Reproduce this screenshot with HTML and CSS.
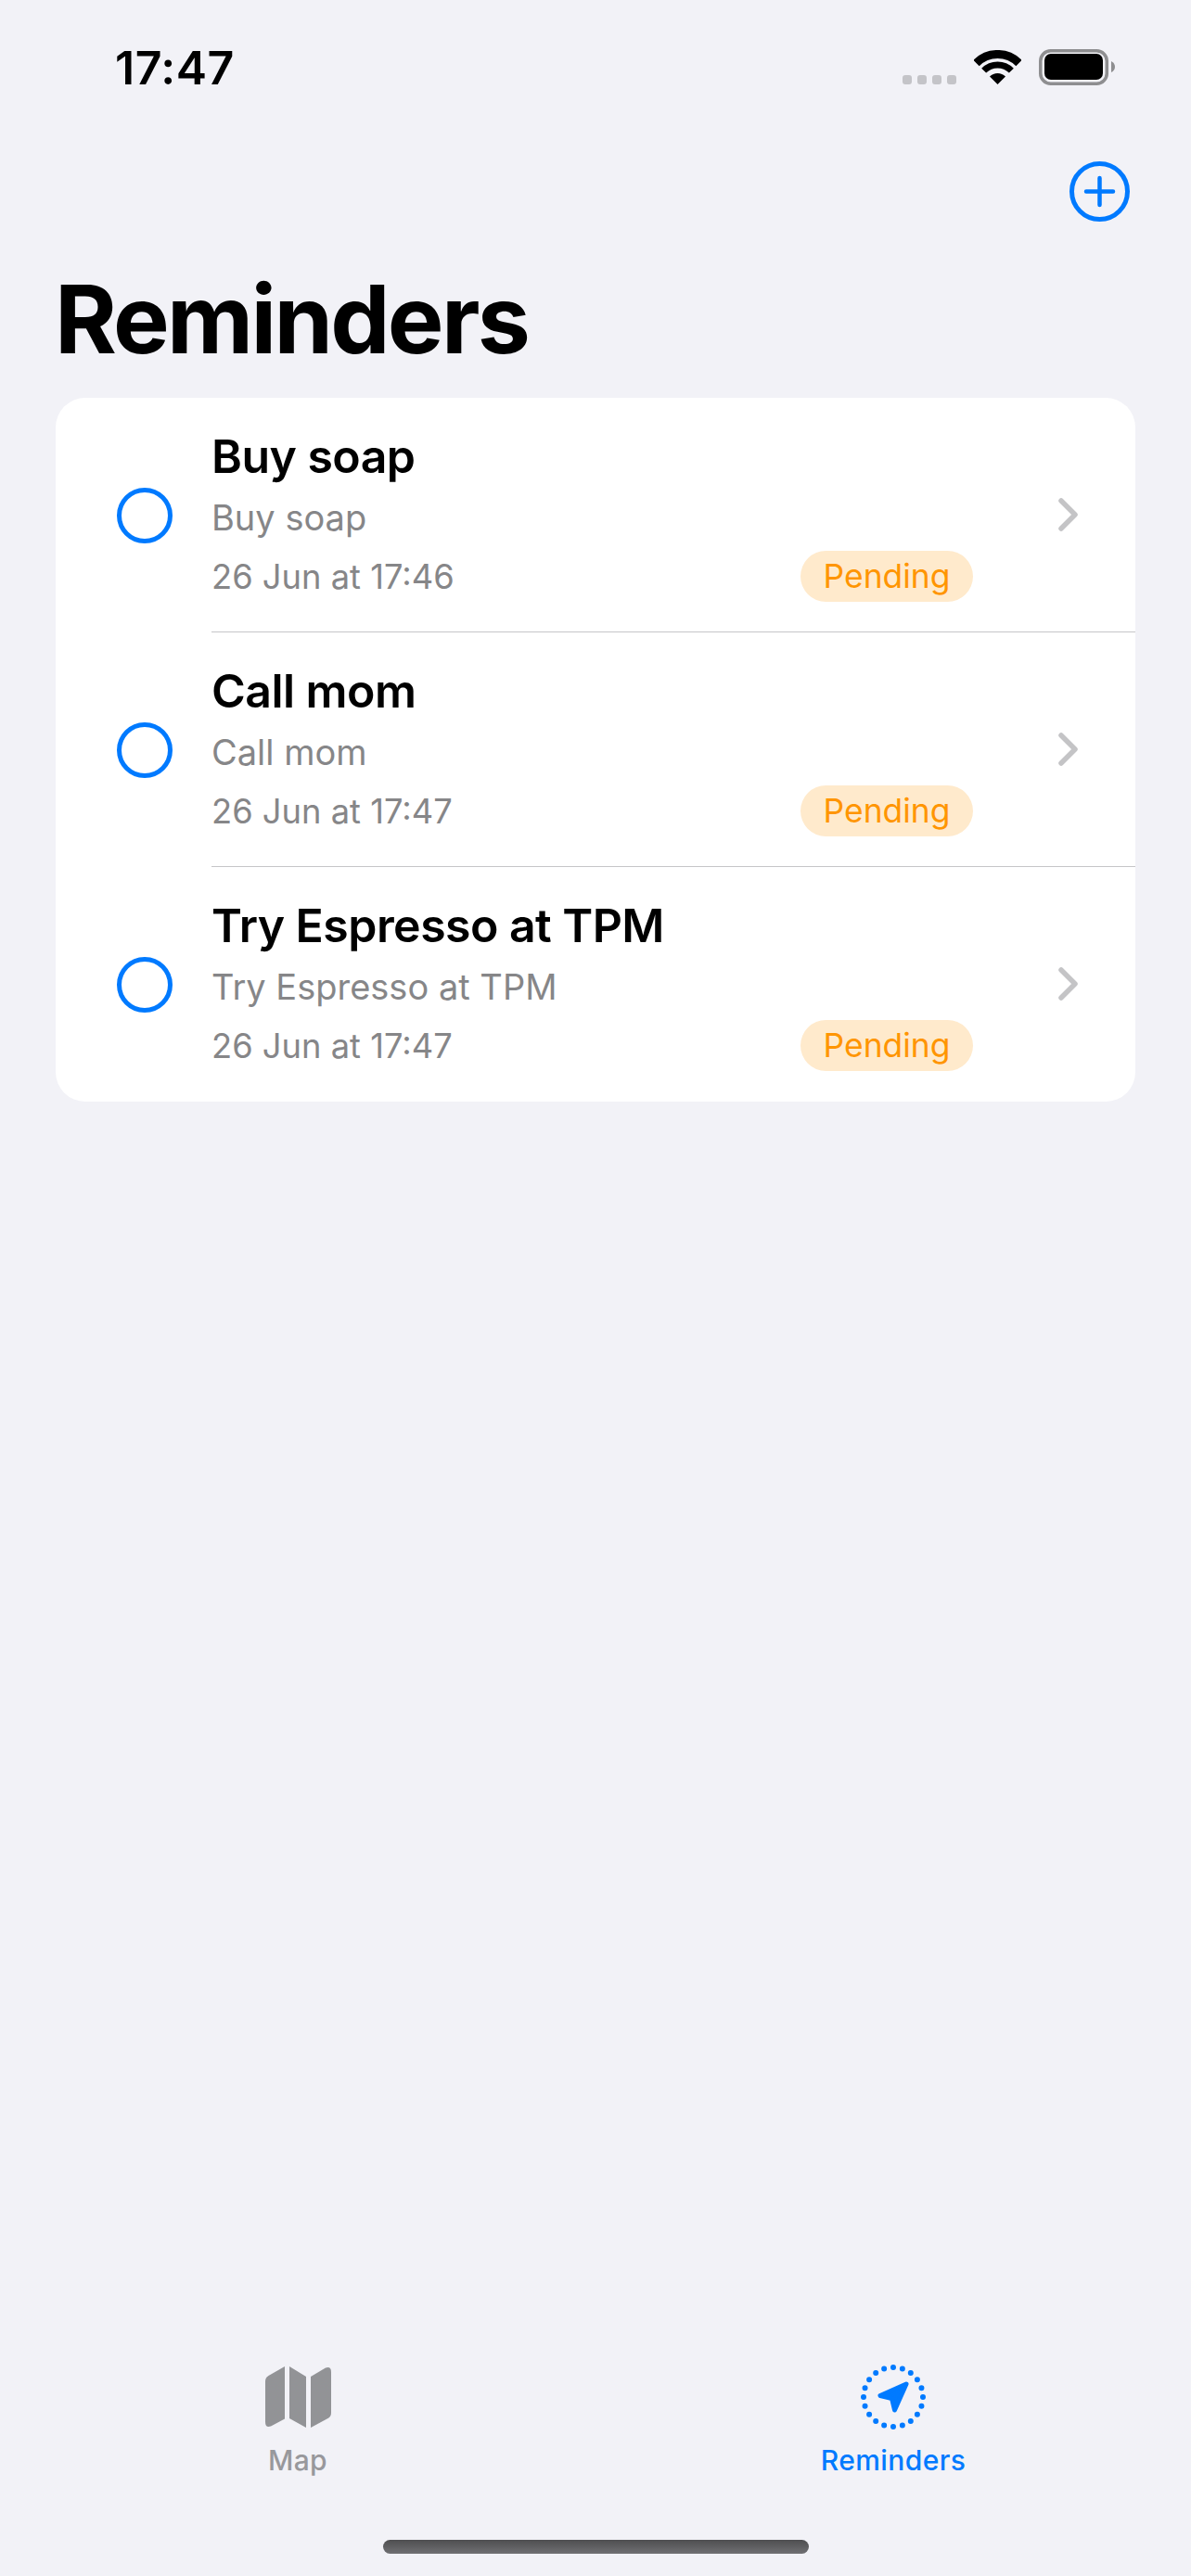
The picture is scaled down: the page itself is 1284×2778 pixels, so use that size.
FILE: index.html
```html
<!DOCTYPE html>
<html lang="en">
  <head>
    <meta charset="UTF-8" />
    <meta name="viewport" content="width=device-width, initial-scale=1.0" />
    <title>Reminders</title>
    <link rel="stylesheet" href="styles.css">
  </head>
  <body>
    <div class="status-bar">
      <span class="time">17:47</span>
      <div class="status-icons">
        <div class="signal"><i></i><i></i><i></i><i></i></div>
        <svg class="wifi" width="51" height="37" viewBox="0 0 51 37">
          <path d="M2.5 14A32.5 32.5 0 0 1 48.5 14" fill="none" stroke="#000" stroke-width="9" />
          <path d="M10.65 22.15A21 21 0 0 1 40.35 22.15" fill="none" stroke="#000" stroke-width="7" />
          <path d="M25.5 37L17 28.5A12 12 0 0 1 34 28.5Z" fill="#000" />
        </svg>
        <svg class="battery" width="82" height="39" viewBox="0 0 82 39">
          <rect x="1.75" y="1.75" width="71.5" height="35.5" rx="11" fill="none" stroke="#8e8e90" stroke-width="3.5" />
          <rect x="6" y="5" width="63" height="28" rx="7" fill="#000" />
          <path d="M78 13Q82 15 82 19Q82 23 78 25Z" fill="#8e8e90" />
        </svg>
      </div>
    </div>

    <div class="nav-bar">
      <svg class="add-btn" width="65" height="65" viewBox="0 0 65 65">
        <circle cx="32.5" cy="32.5" r="30" fill="none" stroke="#007aff" stroke-width="5" />
        <path d="M18 32.5H47M32.5 18V47" fill="none" stroke="#007aff" stroke-width="4.5" stroke-linecap="round" />
      </svg>
    </div>

    <h1 class="page-title">Reminders</h1>

    <div class="card">
      <div class="row">
        <span class="radio"></span>
        <div class="row-body">
          <div class="info">
            <div class="name">Buy soap</div>
            <div class="note">Buy soap</div>
            <div class="meta">
              <span class="date">26 Jun at 17:46</span>
              <span class="pill">Pending</span>
            </div>
          </div>
          <svg class="chevron" width="21" height="36" viewBox="0 0 21 36">
            <path d="M3 3L18 18L3 33" fill="none" stroke="#c4c4c6" stroke-width="5.5" stroke-linecap="round" stroke-linejoin="round" />
          </svg>
        </div>
      </div>
      <div class="row">
        <span class="radio"></span>
        <div class="row-body">
          <div class="info">
            <div class="name">Call mom</div>
            <div class="note">Call mom</div>
            <div class="meta">
              <span class="date">26 Jun at 17:47</span>
              <span class="pill">Pending</span>
            </div>
          </div>
          <svg class="chevron" width="21" height="36" viewBox="0 0 21 36">
            <path d="M3 3L18 18L3 33" fill="none" stroke="#c4c4c6" stroke-width="5.5" stroke-linecap="round" stroke-linejoin="round" />
          </svg>
        </div>
      </div>
      <div class="row">
        <span class="radio"></span>
        <div class="row-body">
          <div class="info">
            <div class="name">Try Espresso at TPM</div>
            <div class="note">Try Espresso at TPM</div>
            <div class="meta">
              <span class="date">26 Jun at 17:47</span>
              <span class="pill">Pending</span>
            </div>
          </div>
          <svg class="chevron" width="21" height="36" viewBox="0 0 21 36">
            <path d="M3 3L18 18L3 33" fill="none" stroke="#c4c4c6" stroke-width="5.5" stroke-linecap="round" stroke-linejoin="round" />
          </svg>
        </div>
      </div>
    </div>

    <div class="tab-bar">
      <div class="tab">
        <div class="tab-icon">
          <svg width="71" height="68" viewBox="0 -1 71 68">
            <path d="M21 0V56.5L6 64.5Q0 66.5 0 60V16Q0 12 3.5 10Z" fill="#929396" />
            <path d="M26 0L44 11V66L26 56Z" fill="#929396" />
            <path d="M49 11L65 1.5Q71 -0.5 71 6V50Q71 54 67.5 56L49 66Z" fill="#929396" />
          </svg>
        </div>
        <span class="tab-label">Map</span>
      </div>
      <div class="tab active">
        <div class="tab-icon">
          <svg width="70" height="70" viewBox="0 0 70 70">
            <circle cx="35" cy="35" r="32" fill="none" stroke="#007aff" stroke-width="6" stroke-linecap="round" pathLength="20" stroke-dasharray="0 1" />
            <path d="M49 21L21 33.5L33.5 36.5L36.5 49Z" fill="#007aff" stroke="#007aff" stroke-width="5" stroke-linejoin="round" />
          </svg>
        </div>
        <span class="tab-label">Reminders</span>
      </div>
    </div>
    <div class="home-indicator"></div>
  </body>
</html>
```

FILE: styles.css
```css
body {
  font-family: Inter, "Noto Sans", sans-serif;
  margin: 0;
  height: 2778px;
  display: flex;
  flex-direction: column;
  background-color: #f2f2f7;
  color: #000;
  overflow: hidden;
}
.status-bar {
  display: flex;
  justify-content: space-between;
  align-items: flex-start;
  padding: 43px 82px 0 124px;
}
.time {
  font-size: 50px;
  line-height: 60px;
  font-weight: 600;
  letter-spacing: 0.5px;
}
.status-icons {
  display: flex;
  align-items: flex-end;
  gap: 19px;
  margin-top: 10px;
}
.signal {
  display: flex;
  gap: 6px;
  margin-bottom: 1px;
}
.signal i {
  width: 10px;
  height: 10px;
  border-radius: 3px;
  background-color: #c4c4c8;
}
.wifi {
  margin-bottom: 1px;
}
.nav-bar {
  display: flex;
  justify-content: flex-end;
  padding: 71px 66px 0 0;
}
.page-title {
  margin: 45px 0 25px;
  padding-left: 59px;
  font-size: 102px;
  line-height: 120px;
  font-weight: 700;
  letter-spacing: -2.7px;
}
.card {
  margin: 0 60px;
  background-color: #fff;
  border-radius: 32px;
  overflow: hidden;
}
.row {
  display: flex;
  align-items: center;
}
.radio {
  flex: none;
  box-sizing: border-box;
  width: 60px;
  height: 60px;
  margin: 0 42px 0 66px;
  border: 5px solid #007aff;
  border-radius: 50%;
}
.row-body {
  flex: 1;
  display: flex;
  align-items: center;
  box-sizing: border-box;
  height: 253px;
  border-bottom: 1px solid #c6c6c8;
}
.row:last-child .row-body {
  border-bottom-color: transparent;
}
.info {
  width: 821px;
}
.name {
  font-size: 50px;
  line-height: 62px;
  font-weight: 600;
  letter-spacing: -0.55px;
}
.note {
  margin-top: 10px;
  font-size: 38px;
  line-height: 50px;
  color: #868688;
}
.meta {
  display: flex;
  justify-content: space-between;
  align-items: center;
  margin-top: 11px;
}
.date {
  font-size: 36.3px;
  color: #868688;
}
.pill {
  width: 186px;
  text-align: center;
  font-size: 35.4px;
  line-height: 55px;
  color: #ff9500;
  background-color: #ffeacc;
  border-radius: 28px;
}
.chevron {
  flex: none;
  margin-left: 92px;
}
.tab-bar {
  display: flex;
  margin-top: auto;
}
.tab {
  flex: 1;
  display: flex;
  flex-direction: column;
  align-items: center;
  gap: 15px;
  color: #98989c;
}
.tab.active {
  color: #007aff;
}
.tab-icon {
  height: 70px;
  display: flex;
  align-items: center;
}
.tab-label {
  font-size: 30px;
  line-height: 36px;
  font-weight: 500;
  letter-spacing: 0.4px;
}
.home-indicator {
  align-self: center;
  width: 459px;
  height: 15px;
  margin: 68px 0 24px;
  border-radius: 8px;
  background: linear-gradient(#4e4e50, #707073);
}
```
